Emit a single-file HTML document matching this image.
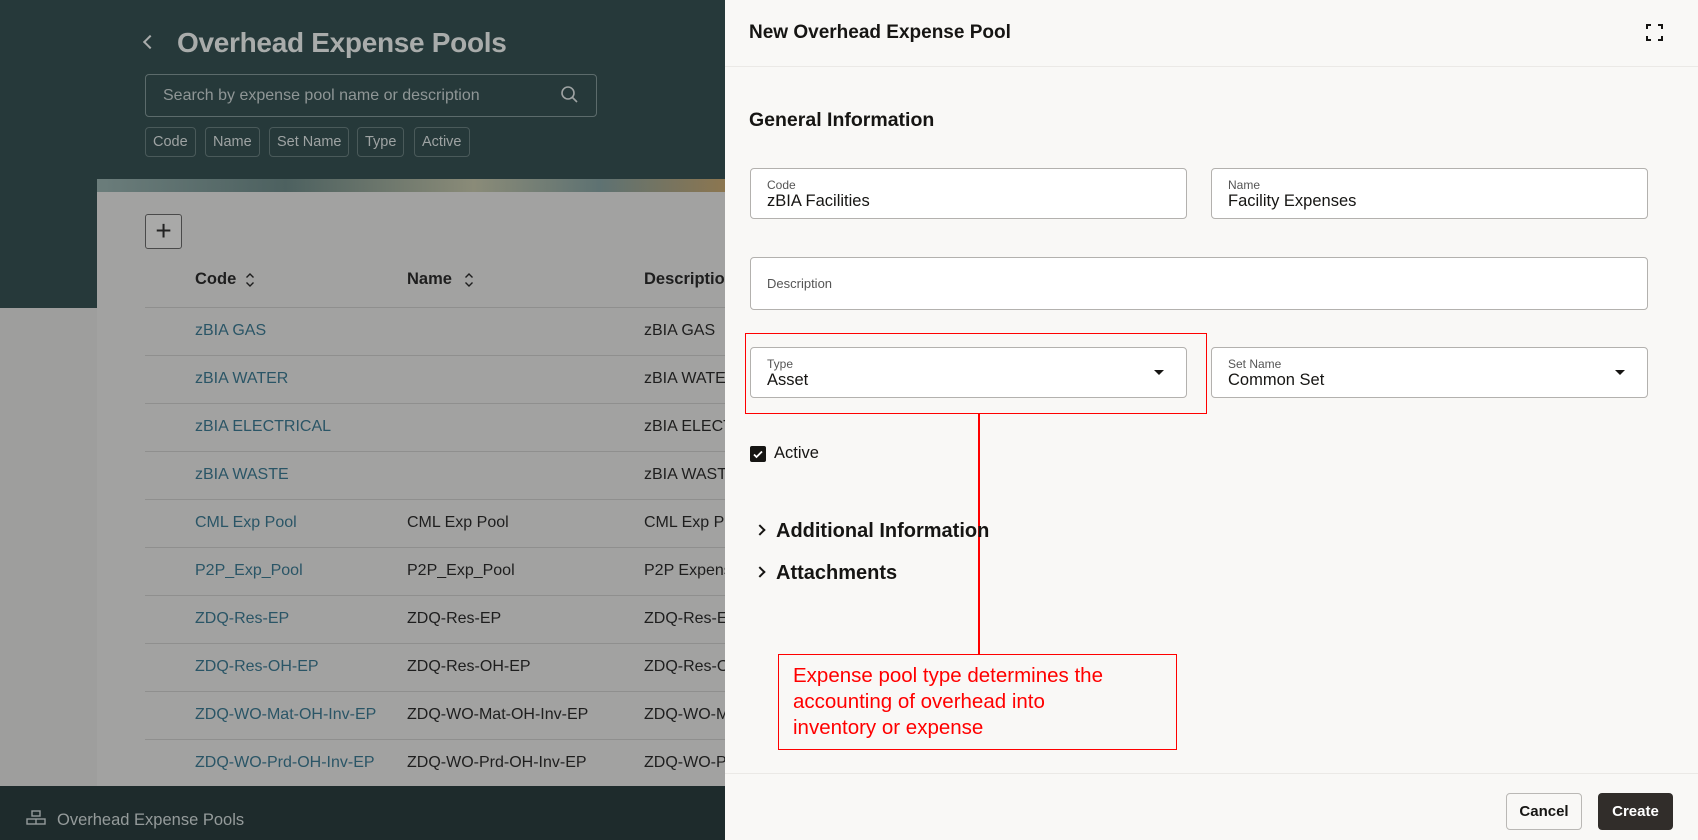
<!DOCTYPE html>
<html><head><meta charset="utf-8"><style>
*{box-sizing:border-box;margin:0;padding:0}
body{width:1698px;height:840px;overflow:hidden;position:relative;font-family:"Liberation Sans",sans-serif;background:#9e9e9d}
.abs{position:absolute}
.top{left:0;top:0;width:725px;height:308px;background:#26393a}
.title{left:177px;top:27px;font-size:28px;font-weight:bold;color:#a9acab;letter-spacing:-0.3px}
.search{left:145px;top:74px;width:452px;height:43px;border:1px solid #5c6b6b;border-radius:4px;color:#8f9696;font-size:16px;padding:12px 17px}
.chip{top:127px;height:30px;border:1px solid #4a5a5a;border-radius:4px;color:#9ea3a3;font-size:14.5px;padding:6px 7px}
.card{left:97px;top:179px;width:628px;height:607px;background:#a2a2a1}
.banner{left:97px;top:179px;width:628px;height:13px;background:linear-gradient(90deg,#6b7d7b,#4d6160 30%,#8a8b78 60%,#5e7272 80%,#8c7650)}
.plus{left:145px;top:214px;width:37px;height:35px;border:1px solid #4a4a4a;border-radius:3px;background:#a9a9a8;font-size:28px;line-height:31px;text-align:center;color:#222}
.th{top:270px;font-size:16.5px;font-weight:bold;color:#1e1e1e}
.row{left:145px;width:580px;height:1px;background:#8f8f8e}
.td{font-size:16px;color:#1e1e1e}
.lk{color:#2a5566}
.bottom{left:0;top:786px;width:725px;height:54px;background:#1e2b2c;color:#959b9b;font-size:16.5px;padding:25px 0 0 57px}
.panel{left:725px;top:0;width:973px;height:840px;background:#f9f8f6}
.hdr{left:725px;top:66px;width:973px;height:1px;background:#ebe9e6}
.field{border:1px solid #b3b1ae;border-radius:4px;background:#fff}
.lab{position:absolute;left:16px;top:9px;font-size:12px;color:#555}
.val{position:absolute;left:16px;top:23px;font-size:16.5px;color:#161513}
.caret{position:absolute;right:22px;top:22px;width:0;height:0;border-left:5px solid transparent;border-right:5px solid transparent;border-top:5px solid #161513}
.sec{font-size:20px;font-weight:bold;color:#161513}
</style></head><body>
<div class="abs top"></div>
<div class="abs" style="left:145px;top:37px;width:10px;height:10px;border-left:2px solid #a9acab;border-bottom:2px solid #a9acab;transform:rotate(45deg)"></div>
<div class="abs title">Overhead Expense Pools</div>
<div class="abs search">Search by expense pool name or description</div>
<svg class="abs" style="left:560px;top:85px" width="20" height="20" viewBox="0 0 20 20"><circle cx="8" cy="8" r="6" fill="none" stroke="#9ea3a3" stroke-width="1.6"/><line x1="12.5" y1="12.5" x2="17" y2="17" stroke="#9ea3a3" stroke-width="1.6"/></svg>
<div class="abs chip" style="left:145px">Code</div>
<div class="abs chip" style="left:205px">Name</div>
<div class="abs chip" style="left:269px">Set Name</div>
<div class="abs chip" style="left:357px">Type</div>
<div class="abs chip" style="left:414px">Active</div>
<div class="abs card"></div>
<div class="abs banner"></div>
<div class="abs plus">+</div>
<div class="abs th" style="left:195px">Code</div>
<svg class="abs" style="left:245px;top:272px" width="10" height="16" viewBox="0 0 10 16"><path d="M1.5 5.5L5 2l3.5 3.5M1.5 10.5L5 14l3.5-3.5" fill="none" stroke="#1e1e1e" stroke-width="1.4"/></svg>
<div class="abs th" style="left:407px">Name</div>
<svg class="abs" style="left:464px;top:272px" width="10" height="16" viewBox="0 0 10 16"><path d="M1.5 5.5L5 2l3.5 3.5M1.5 10.5L5 14l3.5-3.5" fill="none" stroke="#1e1e1e" stroke-width="1.4"/></svg>
<div class="abs th" style="left:644px">Description</div>
<div class="abs row" style="top:307px"></div>
<div class="abs td lk" style="left:195px;top:322px">zBIA GAS</div><div class="abs td" style="left:644px;top:322px">zBIA GAS</div>
<div class="abs row" style="top:355px"></div>
<div class="abs td lk" style="left:195px;top:370px">zBIA WATER</div><div class="abs td" style="left:644px;top:370px">zBIA WATER</div>
<div class="abs row" style="top:403px"></div>
<div class="abs td lk" style="left:195px;top:418px">zBIA ELECTRICAL</div><div class="abs td" style="left:644px;top:418px">zBIA ELECTRICAL</div>
<div class="abs row" style="top:451px"></div>
<div class="abs td lk" style="left:195px;top:466px">zBIA WASTE</div><div class="abs td" style="left:644px;top:466px">zBIA WASTE</div>
<div class="abs row" style="top:499px"></div>
<div class="abs td lk" style="left:195px;top:514px">CML Exp Pool</div><div class="abs td" style="left:407px;top:514px">CML Exp Pool</div><div class="abs td" style="left:644px;top:514px">CML Exp Pool</div>
<div class="abs row" style="top:547px"></div>
<div class="abs td lk" style="left:195px;top:562px">P2P_Exp_Pool</div><div class="abs td" style="left:407px;top:562px">P2P_Exp_Pool</div><div class="abs td" style="left:644px;top:562px">P2P Expense</div>
<div class="abs row" style="top:595px"></div>
<div class="abs td lk" style="left:195px;top:610px">ZDQ-Res-EP</div><div class="abs td" style="left:407px;top:610px">ZDQ-Res-EP</div><div class="abs td" style="left:644px;top:610px">ZDQ-Res-EP</div>
<div class="abs row" style="top:643px"></div>
<div class="abs td lk" style="left:195px;top:658px">ZDQ-Res-OH-EP</div><div class="abs td" style="left:407px;top:658px">ZDQ-Res-OH-EP</div><div class="abs td" style="left:644px;top:658px">ZDQ-Res-OH</div>
<div class="abs row" style="top:691px"></div>
<div class="abs td lk" style="left:195px;top:706px">ZDQ-WO-Mat-OH-Inv-EP</div><div class="abs td" style="left:407px;top:706px">ZDQ-WO-Mat-OH-Inv-EP</div><div class="abs td" style="left:644px;top:706px">ZDQ-WO-Mat</div>
<div class="abs row" style="top:739px"></div>
<div class="abs td lk" style="left:195px;top:754px">ZDQ-WO-Prd-OH-Inv-EP</div><div class="abs td" style="left:407px;top:754px">ZDQ-WO-Prd-OH-Inv-EP</div><div class="abs td" style="left:644px;top:754px">ZDQ-WO-Prd</div>
<div class="abs bottom">Overhead Expense Pools</div>
<svg class="abs" style="left:26px;top:810px" width="20" height="16" viewBox="0 0 20 16"><g fill="none" stroke="#959b9b" stroke-width="1.4"><rect x="6" y="1" width="8" height="5"/><rect x="1" y="9" width="18" height="5"/><line x1="10" y1="9" x2="10" y2="14"/></g></svg>

<div class="abs panel"></div>
<div class="abs hdr"></div>
<div class="abs" style="left:749px;top:22px;font-size:19px;font-weight:bold;color:#161513">New Overhead Expense Pool</div>
<svg class="abs" style="left:1646px;top:24px" width="17" height="17" viewBox="0 0 17 17"><g fill="none" stroke="#161513" stroke-width="2"><path d="M1 5V1h4M12 1h4v4M16 12v4h-4M5 16H1v-4"/></g></svg>
<div class="abs" style="left:749px;top:109px;font-size:19.5px;font-weight:bold;color:#161513">General Information</div>
<div class="abs field" style="left:750px;top:168px;width:437px;height:51px"><span class="lab">Code</span><span class="val">zBIA Facilities</span></div>
<div class="abs field" style="left:1211px;top:168px;width:437px;height:51px"><span class="lab">Name</span><span class="val">Facility Expenses</span></div>
<div class="abs field" style="left:750px;top:257px;width:898px;height:53px"><span class="lab" style="top:18px;font-size:13px">Description</span></div>
<div class="abs field" style="left:750px;top:347px;width:437px;height:51px"><span class="lab">Type</span><span class="val">Asset</span><span class="caret"></span></div>
<div class="abs field" style="left:1211px;top:347px;width:437px;height:51px"><span class="lab">Set Name</span><span class="val">Common Set</span><span class="caret"></span></div>
<div class="abs" style="left:745px;top:333px;width:462px;height:81px;border:1.5px solid #f00"></div>
<div class="abs" style="left:750px;top:446px;width:16px;height:16px;background:#161513;border-radius:2px"></div>
<svg class="abs" style="left:750px;top:446px" width="16" height="16" viewBox="0 0 16 16"><path d="M4 8.5l2.5 2.5L12 5.5" fill="none" stroke="#fff" stroke-width="1.8"/></svg>
<div class="abs" style="left:774px;top:444px;font-size:16.5px;color:#161513">Active</div>
<div class="abs" style="left:978px;top:413px;width:1.5px;height:241px;background:#f00"></div>
<div class="abs" style="left:756px;top:526px;width:8px;height:8px;border-right:2px solid #161513;border-top:2px solid #161513;transform:rotate(45deg)"></div>
<div class="abs sec" style="left:776px;top:520px">Additional Information</div>
<div class="abs" style="left:756px;top:568px;width:8px;height:8px;border-right:2px solid #161513;border-top:2px solid #161513;transform:rotate(45deg)"></div>
<div class="abs sec" style="left:776px;top:562px">Attachments</div>
<div class="abs" style="left:778px;top:654px;width:399px;height:96px;border:1.5px solid #f00;color:#f00;font-size:20.5px;line-height:26px;padding:8px 0 0 14px;white-space:nowrap">Expense pool type determines the<br>accounting of overhead into<br>inventory or expense</div>
<div class="abs" style="left:725px;top:773px;width:973px;height:1px;background:#ebe9e6"></div>
<div class="abs" style="left:1506px;top:793px;width:76px;height:37px;border:1px solid #bab8b5;border-radius:4px;background:#f9f8f6;font-size:15px;font-weight:bold;text-align:center;line-height:35px;color:#161513">Cancel</div>
<div class="abs" style="left:1598px;top:793px;width:75px;height:37px;border-radius:4px;background:#312d2a;font-size:15px;font-weight:bold;text-align:center;line-height:37px;color:#fff">Create</div>
</body></html>
